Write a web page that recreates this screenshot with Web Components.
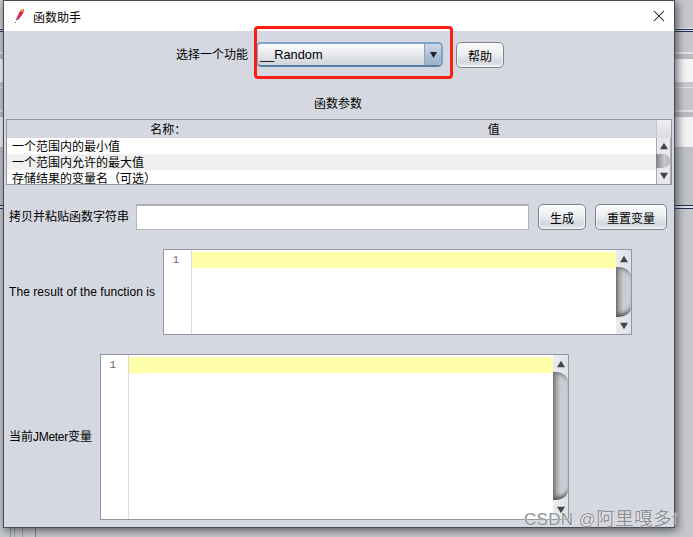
<!DOCTYPE html>
<html lang="zh"><head><meta charset="utf-8"><title>函数助手</title>
<style>html,body{margin:0;padding:0;height:100%;overflow:hidden;font:12px "Liberation Sans","Noto Sans CJK SC",sans-serif;color:#000}</style>
</head><body>
<x-desktop>
  <x-window title-text="函数助手">
    <x-row style="justify-content:center;gap:8px;padding:11px 0 0 2px">
      <x-text>选择一个功能</x-text>
      <x-combo style="align-self:flex-start">__Random</x-combo>
      <x-button style="width:48px;margin-left:5px">帮助</x-button>
    </x-row>
    <x-row style="justify-content:center;padding:28px 2px 0 0;height:17px"><x-text>函数参数</x-text></x-row>
    <x-table style="margin:6px 0 0 2px"></x-table>
    <x-row style="padding:19px 0 0 5px">
      <x-text style="width:120px">拷贝并粘贴函数字符串</x-text>
      <x-input style="margin-left:7px;width:393px"></x-input>
      <x-button style="width:48px;margin-left:9px">生成</x-button>
      <x-button style="width:72px;margin-left:9px">重置变量</x-button>
    </x-row>
    <x-row style="padding:19px 0 0 5px;gap:8px">
      <x-text style="width:146px;letter-spacing:.07px">The result of the function is</x-text>
      <x-editor style="height:86px"></x-editor>
    </x-row>
    <x-row style="padding:19px 0 0 5px;gap:8px">
      <x-text style="width:83px">当前<span style="letter-spacing:-.3px">JMeter</span>变量</x-text>
      <x-editor bottom-btn="19" style="height:166px"></x-editor>
    </x-row>
  </x-window>
  <x-watermark>CSDN @<span style="font-size:18.7px">阿里嘎多</span>f</x-watermark>
  <x-mark></x-mark>
</x-desktop>
<script>
function def(name, css, html, extra){
  customElements.define(name, class extends HTMLElement{
    constructor(){super();this.attachShadow({mode:'open'}).innerHTML='<style>'+css+'</style>'+html;}
    connectedCallback(){ if(extra) extra.call(this); }
  });
}
def('x-desktop',`:host{display:block;position:relative;width:693px;height:537px;overflow:hidden;
  background:
   linear-gradient(90deg,transparent 0 10px,#8f9197 10px 11px,transparent 11px 14px,#a0a2a8 14px 15px,transparent 15px 22px,#a0a2a8 22px 23px,transparent 23px 35px,#7d7f85 35px 36px,transparent 36px) left bottom/100% 9px no-repeat,
   linear-gradient(180deg,#c6c8ce 0 28px,#e6e7ea 28px 29px,#1f2c55 29px 30px,#dfe2e8 30px 31px,#1f2c55 31px 32px,#c6c8ce 32px 52px,#e2e3e7 52px 54px,#b9bbc1 54px 59px,#f5f5f6 59px 82px,#c6c8ce 82px 87px,#e2e3e7 87px 88px,#c6c8ce 88px 110px,#e2e3e7 110px 112px,#bbbdc3 112px 117px,#f3f3f4 117px 147px,#c0c2c8 147px 205px,#1f2c55 205px 206px,#dfe2e8 206px 208px,#1f2c55 208px 209px,#c6c8ce 209px);}`,
  `<slot></slot>`);
def('x-window',`:host{display:flex;flex-direction:column;box-sizing:border-box;width:672px;height:528px;margin-left:3px;border:1px solid #4a4c52;background:#d5d8e0;box-shadow:2px 2px 9px rgba(40,42,50,.75)}
  .t{display:flex;align-items:center;height:30px;background:#fff;flex:none;font-size:12px}
  svg.i{margin-left:10px;flex:none}
  .n{margin-left:8px;flex:1;font-family:"Noto Sans CJK SC",sans-serif}
  svg.c{margin-right:9px;flex:none}`,
  `<div class="t"><svg class="i" width="11" height="16" viewBox="0 0 11 16"><path d="M9.800 1 C10.500 2 9.500 5 8 7 L4.500 11.500 L2.500 10.500 L5.500 4 C6.500 2.200 8.500 .7 9.800 1Z" fill="#d02a55"/><path d="M9.800 1 C10.400 1.800 9.900 3.300 9.200 4.500 L6.300 3 C7.200 1.900 8.700 .7 9.800 1Z" fill="#f0902c"/><path d="M4.500 11.500 L2.500 10.500 L2 12.500 Z" fill="#7c2a78"/><rect x="1" y="14" width="1" height="1" fill="#5a3a8a"/></svg><span class="n"></span><svg class="c" width="12" height="12" viewBox="0 0 12 12"><path d="M1 1L11 11M11 1L1 11" stroke="#111" stroke-width="1.050" fill="none"/></svg></div><slot></slot>`,
  function(){this.shadowRoot.querySelector('.n').textContent=this.getAttribute('title-text');});
def('x-row',`:host{display:flex;align-items:center;flex:none}`,`<slot></slot>`);
def('x-text',`:host{display:block;font-size:12px;line-height:17px;white-space:nowrap;flex:none}`,`<slot></slot>`);
def('x-button',`:host{display:flex;box-sizing:border-box;align-items:center;justify-content:center;height:26px;flex:none;border:1px solid #7f8288;border-radius:5px;font-size:12px;background:linear-gradient(180deg,#fbfbfc 0,#eceef1 45%,#d3d6dd 80%,#eef0f3 100%);box-shadow:inset 0 0 0 1px rgba(255,255,255,.5)}`,`<slot></slot>`);
def('x-combo',`:host{display:flex;box-sizing:border-box;width:187px;height:25px;flex:none;border:2px solid #7fa4c9;border-bottom-color:#5b7ea5;border-radius:5px;font-size:12.800px;background:linear-gradient(180deg,#fafbfc 0,#e6e8ec 50%,#d0d3da 100%)}
  .l{flex:1;padding-left:2px;line-height:21px}
  .a{width:16px;display:flex;align-items:center;justify-content:center;border-left:1px solid #8ba1b7;background:linear-gradient(180deg,#cfdbe6,#a7bccf 60%,#9ab2c8);border-radius:0 3px 3px 0}`,
  `<div class="l"><slot></slot></div><div class="a"><svg width="7" height="6" viewBox="0 0 7 6"><path d="M0 0H7L3.500 6Z" fill="#1b2230"/></svg></div>`);
def('x-input',`:host{display:block;box-sizing:border-box;height:26px;flex:none;background:#fff;border:1px solid #b5b7bd;border-top:2px solid #aeb0b6}`,``);
const up=s=>`<svg width="${s}" height="${s}" viewBox="0 0 10 10"><path d="M5 1L10 9H0Z" fill="#44464c"/></svg>`;
const dn=s=>`<svg width="${s}" height="${s}" viewBox="0 0 10 10"><path d="M0 1H10L5 9Z" fill="#44464c"/></svg>`;
def('x-scroll',`:host{display:flex;flex-direction:column;flex:none;width:15px;height:100%;background:linear-gradient(90deg,#e9ebee,#dfe1e6);overflow:hidden}
  .b{flex:none;height:17px;display:flex;align-items:center;justify-content:center}
  .th{flex:1;min-height:0;background:linear-gradient(90deg,#6f7074 0,#a4a5a9 22%,#c9cacf 50%,#cfd0d5 100%);border-radius:0 12px 12px 0/0 10px 10px 0;box-shadow:inset 0 5px 4px -3px #77787c,inset 0 -6px 4px -3px #55565a}`,
  `<div class="b">${up(8)}</div><div class="th"></div><div class="b last">${dn(8)}</div>`);
def('x-editor',`:host{display:flex;box-sizing:border-box;width:469px;flex:none;border:1px solid #9196a0;background:#fff;font-size:12px}
  .g{flex:none;width:27px;border-right:1px solid #dcdcdc;box-sizing:content-box;font:11px "Liberation Mono",monospace;color:#7a5a70;text-align:right;padding-top:2px;line-height:16px}
  .g span{margin-right:12px}
  .m{flex:1;padding-top:2px}.y{height:16px;background:#ffffaa}`,
  `<div class="g"><span>1</span></div><div class="m"><div class="y"></div></div><x-scroll></x-scroll>`,
  function(){const h=this.getAttribute('bottom-btn');const s=this.shadowRoot.querySelector('x-scroll');if(h&&s.shadowRoot)s.shadowRoot.querySelector('.last').style.height=h+'px';});
def('x-table',`:host{display:block;box-sizing:border-box;width:666px;height:66px;flex:none;border:1px solid #9196a0;background:#fff;overflow:hidden;font-family:"Noto Sans CJK SC",sans-serif;font-size:12px}
  .h{display:grid;grid-template-columns:1fr 1fr 15px;height:18px;background:#d5d8e0;line-height:18px;text-align:center}
  .h div:first-child{padding-right:2px}
  .corner{background:linear-gradient(180deg,#eef0f2,#d9dbe1);border-left:1px solid #c4c6cc}
  .body{display:flex;height:46px}
  .rows{flex:1;overflow:hidden}
  .r{height:16px;line-height:16px;padding-left:5px;white-space:nowrap}
  .r:nth-child(2){background:#f0f0f0}
  .sb{flex:none;width:15px;box-sizing:border-box;border:1px solid #a8abb2;border-width:0 1px 0 1px;display:flex;flex-direction:column;background:#e6e8eb}
  .sb .b{height:16px;flex:none;display:flex;align-items:center;justify-content:center}
  .sb .th{flex:1;margin:0 0 0 -1px;border-radius:0 60% 60% 0;background:linear-gradient(90deg,#808185,#c8c9cd 60%,#b0b1b5)}`,
  `<div class="h"><div>名称：</div><div>值</div><div class="corner"></div></div>
   <div class="body"><div class="rows"><div class="r">一个范围内的最小值</div><div class="r">一个范围内允许的最大值</div><div class="r">存储结果的变量名（可选）</div></div>
   <div class="sb"><div class="b">${up(8)}</div><div class="th"></div><div class="b">${dn(8)}</div></div></div>`);
def('x-watermark',`:host{position:absolute;left:524px;top:507px;font:17px/24px "Liberation Sans","Noto Sans CJK SC",sans-serif;letter-spacing:.3px;color:#8d8f95;white-space:nowrap;text-shadow:0 0 1px #fff,0 0 1px #fff}`,`<slot></slot>`);
def('x-mark',`:host{position:absolute;left:254px;top:26px;width:199px;height:53px;box-sizing:border-box;border:3px solid #fb1e14;border-radius:4px}`,``);
</script>
</body></html>
